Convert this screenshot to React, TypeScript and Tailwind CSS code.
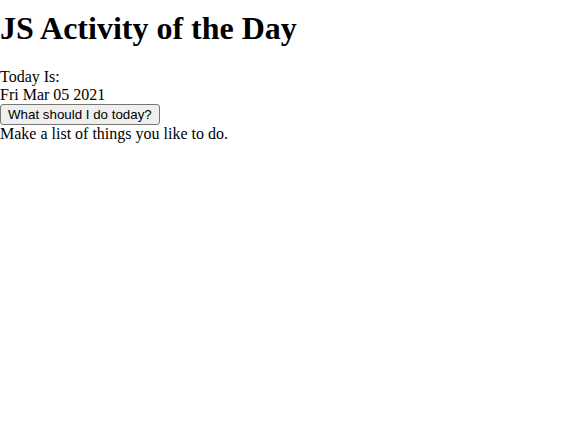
export default function App() {
  return (
    <div className="min-h-screen bg-white text-black" style={{ fontFamily: '"Liberation Serif", "Times New Roman", serif' }}>
      <h1 className="mt-[10px] mb-[21.44px] text-[32px] font-bold leading-[normal]">JS Activity of the Day</h1>
      <div className="text-base leading-[normal]">
        <div>Today Is:</div>
        <div>Fri Mar 05 2021</div>
        <button className="block rounded-[3px] border border-[#767676] bg-[#efefef] px-[7px] py-[2px] font-['Liberation_Sans',Arial,sans-serif] text-[13.33px] leading-[normal] text-black">
          What should I do today?
        </button>
        <div>Make a list of things you like to do.</div>
      </div>
    </div>
  );
}
